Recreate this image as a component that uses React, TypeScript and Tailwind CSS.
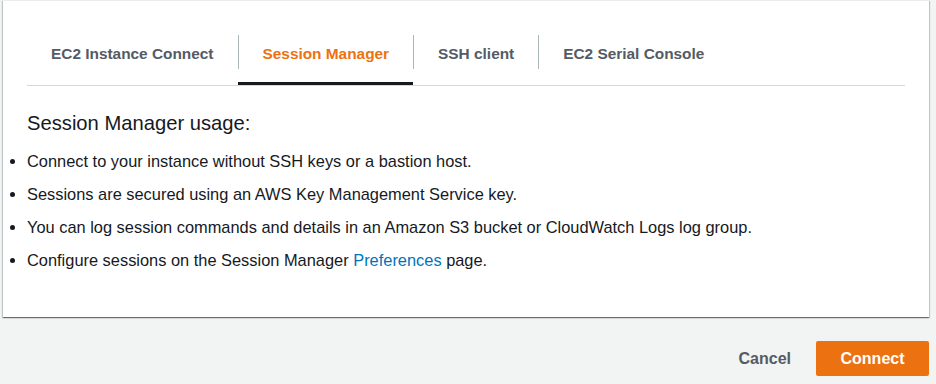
export default function App() {
  const tabs = ["EC2 Instance Connect", "Session Manager", "SSH client", "EC2 Serial Console"];
  const active = 1;

  return (
    <div
      className="w-[936px] h-[384px] bg-[#f2f3f3] overflow-hidden"
      style={{ fontFamily: '"Liberation Sans", Arial, sans-serif' }}
    >
      <div className="ml-[3px] w-[926px] h-[317px] bg-white border-t border-[#eaeded] shadow-[0_1px_1px_0_rgba(0,28,36,0.45),1px_1px_1px_0_rgba(0,28,36,0.15),-1px_1px_1px_0_rgba(0,28,36,0.15)] px-6 pt-[34px]">
        <div className="flex border-b border-[#d5dbdb]">
          {tabs.map((t, i) => (
            <div
              key={t}
              className={
                i === active
                  ? "pb-[13px] border-b-[3px] border-[#16191f]"
                  : "pb-[16px]"
              }
            >
              <div
                className={
                  "h-[34px] flex items-center pt-[3px] px-6 text-[15.4px] font-bold " +
                  (i === 0 ? "" : "border-l border-[#aab7b8] ") +
                  (i === active ? "text-[#ec7211]" : "text-[#545b64]")
                }
              >
                {t}
              </div>
            </div>
          ))}
        </div>

        <h2 className="mt-[23px] text-[20.2px] leading-[28px] text-[#16191f]">Session Manager usage:</h2>

        <ul className="mt-[13px] list-disc text-[16.4px] leading-[22px] text-[#16191f] flex flex-col gap-[11px] marker:text-[#16191f]">
          <li>Connect to your instance without SSH keys or a bastion host.</li>
          <li>Sessions are secured using an AWS Key Management Service key.</li>
          <li>You can log session commands and details in an Amazon S3 bucket or CloudWatch Logs log group.</li>
          <li>
            Configure sessions on the Session Manager{" "}
            <a className="text-[#0073bb]" href="#">Preferences</a> page.
          </li>
        </ul>
      </div>

      <div className="mt-[24px] w-[929px] flex justify-end items-center gap-[5px]">
        <button className="h-[35px] px-5 text-[16px] font-bold text-[#545b64]">Cancel</button>
        <button className="h-[35px] w-[113px] rounded-[2px] bg-[#ec7211] text-[16px] font-bold text-white">
          Connect
        </button>
      </div>
    </div>
  );
}
